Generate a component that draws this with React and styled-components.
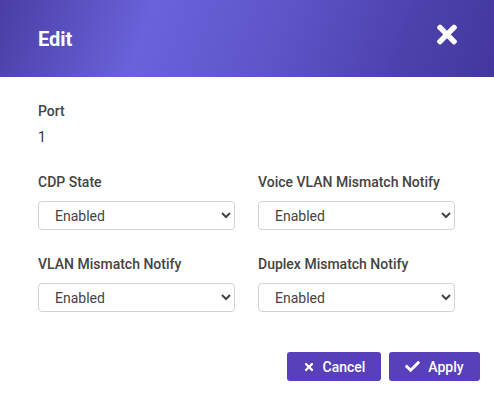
import React from "react";
import styled, { createGlobalStyle } from "styled-components";
import { FaTimes, FaCheck } from "react-icons/fa";

const Global = createGlobalStyle`
  html, body { margin: 0; padding: 0; background: #fff; }
  body { font-family: Roboto, "Liberation Sans", Arial, sans-serif; }
`;

const Modal = styled.div`
  width: 494px;
  height: 394px;
  background: #fff;
  display: flex;
  flex-direction: column;
`;

const Header = styled.div`
  height: 77px;
  box-sizing: border-box;
  padding: 0 38px 0 38px;
  display: flex;
  align-items: center;
  justify-content: space-between;
  background: linear-gradient(110deg, #4a3ea4 0%, #6a62da 30%, #5e55c9 55%, #4d42ad 80%, #43379e 100%);
  color: #fff;
`;

const Title = styled.h1`
  margin: 0;
  font-size: 20px;
  font-weight: 700;
  line-height: 24px;
  padding-top: 1px;
`;

const CloseBtn = styled.button`
  border: none;
  background: transparent;
  color: #fff;
  padding: 0;
  display: flex;
  align-items: center;
  justify-content: center;
  margin-top: -8px;
  margin-right: -1px;
  cursor: pointer;
  svg { width: 20px; height: 29px; }
`;

const Body = styled.div`
  padding: 24px 38px 0 38px;
`;

const Field = styled.div`
  display: flex;
  flex-direction: column;
`;

const Label = styled.div`
  font-size: 14px;
  font-weight: 500;
  color: #444;
  line-height: 20px;
  margin-bottom: ${(p) => p.$gap}px;
`;

const Value = styled.div`
  font-size: 14px;
  color: #333;
  line-height: 20px;
`;

const Grid = styled.div`
  display: grid;
  grid-template-columns: 197px 197px;
  column-gap: 23px;
  row-gap: 24px;
  margin-top: 25px;
`;

const Select = styled.select`
  height: 29px;
  width: 100%;
  box-sizing: border-box;
  border: 1px solid #d3d3d3;
  border-radius: 4px;
  background: #fff;
  font-family: Roboto, "Liberation Sans", Arial, sans-serif;
  font-size: 14px;
  color: #444;
  padding: 0 6px 0 12px;
  outline: none;
`;

const Footer = styled.div`
  display: flex;
  justify-content: flex-end;
  gap: 8px;
  padding: 40px 14px 0 0;
`;

const Button = styled.button`
  width: ${(p) => p.$w}px;
  height: 29px;
  border: none;
  border-radius: 3px;
  background: #5840bb;
  color: #fff;
  font-family: Roboto, "Liberation Sans", Arial, sans-serif;
  font-size: 14px;
  font-weight: 500;
  display: flex;
  align-items: center;
  justify-content: center;
  gap: 8px;
  padding: 0;
  cursor: pointer;
  svg { width: ${(p) => p.$icon}px; height: ${(p) => p.$icon}px; }
`;

const fields = [
  "CDP State",
  "Voice VLAN Mismatch Notify",
  "VLAN Mismatch Notify",
  "Duplex Mismatch Notify",
];

export default function App() {
  return (
    <Modal>
      <Global />
      <Header>
        <Title>Edit</Title>
        <CloseBtn aria-label="Close">
          <FaTimes />
        </CloseBtn>
      </Header>
      <Body>
        <Field>
          <Label $gap={6}>Port</Label>
          <Value>1</Value>
        </Field>
        <Grid>
          {fields.map((f) => (
            <Field key={f}>
              <Label $gap={9}>{f}</Label>
              <Select defaultValue="Enabled">
                <option>Enabled</option>
                <option>Disabled</option>
              </Select>
            </Field>
          ))}
        </Grid>
      </Body>
      <Footer>
        <Button $w={94} $icon={12}>
          <FaTimes />
          Cancel
        </Button>
        <Button $w={91} $icon={15}>
          <FaCheck />
          Apply
        </Button>
      </Footer>
    </Modal>
  );
}
